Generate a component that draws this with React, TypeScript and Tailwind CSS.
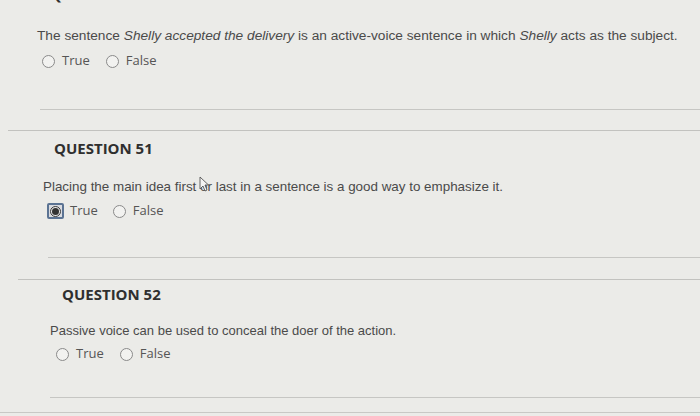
import React from 'react';

const sans = { fontFamily: '"Liberation Sans", Arial, sans-serif' };

// 普通单选圆圈
const Radio = () => (
  <span className="inline-block w-[13px] h-[13px] rounded-full border-[1.5px] border-[#8a8a8a] bg-[#f2f2f0]" />
);

// 已选中的单选（带焦点框）
const RadioChecked = () => (
  <span className="inline-flex items-center justify-center w-[17px] h-[16px] border-2 border-[#5b7393] rounded-[2px] bg-[#d9dbe0]">
    <span className="flex items-center justify-center w-[11px] h-[11px] rounded-full border border-[#3a3a3a] bg-[#e8e8e8]">
      <span className="w-[7px] h-[7px] rounded-full bg-[#333]" />
    </span>
  </span>
);

const Option = ({ label, checked = false }: { label: string; checked?: boolean }) => (
  <span className={`flex items-center ${checked ? 'gap-[6px]' : 'gap-[7px]'}`}>
    {checked ? <RadioChecked /> : <Radio />}
    <span className="text-[13px] text-[#555] font-['Open_Sans',sans-serif]">{label}</span>
  </span>
);

// 鼠标指针（压在 "or" 的 o 上）
const Cursor = () => (
  <svg width="10" height="16" viewBox="0 0 10 16" className="absolute left-[-1px] top-[-3px]">
    <path d="M1 1 L1 13 L4 10 L6 15 L8 14 L6 9 L9.5 9 Z" fill="#f4f4f4" stroke="#555" strokeWidth="0.9" strokeLinejoin="round" />
  </svg>
);

export default function App() {
  return (
    <div className="w-[700px] h-[416px] overflow-hidden bg-[#ebebe8] text-[#4a4a4a]">
      {/* 第 50 题（只露出下半部分） */}
      <div className="pl-[37px]">
        <div className="pl-[13px] mt-[-16px] h-[20px] text-[15px] leading-[20px] font-bold text-[#2f2f2f] font-['Open_Sans',sans-serif]">
          QUESTION 50
        </div>
        <p className="mt-[23px] text-[13.7px] leading-[18px]" style={sans}>
          The sentence <i>Shelly accepted the delivery</i> is an active-voice sentence in which <i>Shelly</i> acts as the subject.
        </p>
        <div className="mt-[6px] h-[20px] pl-[5px] flex items-center gap-[16px]">
          <Option label="True" />
          <Option label="False" />
        </div>
        <div className="mt-[38px] ml-[3px] border-t border-[#c6c6c3]" />
      </div>
      <div className="mt-[20px] ml-[8px] border-t border-[#c2c2bf]" />

      {/* 第 51 题 */}
      <div className="pl-[43px]">
        <div className="mt-[7px] pl-[11px] h-[20px] text-[15px] leading-[20px] font-bold text-[#2f2f2f] font-['Open_Sans',sans-serif]">
          QUESTION 51
        </div>
        <p className="mt-[20px] text-[13.4px] leading-[18px]" style={sans}>
          Placing the main idea first <span className="relative">o<Cursor /></span>r last in a sentence is a good way to emphasize it.
        </p>
        <div className="mt-[5px] h-[20px] pl-[4px] flex items-center gap-[15px]">
          <Option label="True" checked />
          <Option label="False" />
        </div>
        <div className="mt-[36px] ml-[5px] border-t border-[#c6c6c3]" />
      </div>
      <div className="mt-[21px] ml-[18px] border-t border-[#c2c2bf]" />

      {/* 第 52 题 */}
      <div className="pl-[50px]">
        <div className="mt-[4px] pl-[12px] h-[20px] text-[15px] leading-[20px] font-bold text-[#2f2f2f] font-['Open_Sans',sans-serif]">
          QUESTION 52
        </div>
        <p className="mt-[18px] text-[13px] leading-[18px]" style={sans}>
          Passive voice can be used to conceal the doer of the action.
        </p>
        <div className="mt-[4px] h-[20px] pl-[6px] flex items-center gap-[16px]">
          <Option label="True" />
          <Option label="False" />
        </div>
        <div className="mt-[33px] border-t border-[#c6c6c3]" />
      </div>
      <div className="mt-[14px] border-t border-[#c8c8c5]" />
    </div>
  );
}
